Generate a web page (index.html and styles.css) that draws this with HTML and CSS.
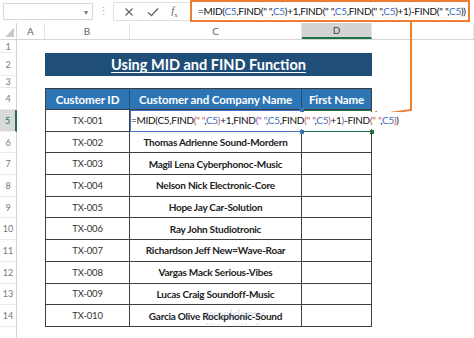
FILE: index.html
```html
<!DOCTYPE html>
<html lang="en">
<head>
  <meta charset="UTF-8" />
  <title>Using MID and FIND Function</title>
  <link rel="stylesheet" href="styles.css">
</head>
<body>
  <div class="window">

    <!-- formula bar -->
    <div class="toolbar">
      <div class="namebox"><span class="drop">▾</span></div>
      <div class="grip">⋮</div>
      <div class="buttons">
        <svg class="icon" viewBox="0 0 10 10" width="10" height="10"><path d="M1.5 1.5 L8.5 8.5 M8.5 1.5 L1.5 8.5" /></svg>
        <svg class="icon" viewBox="0 0 12 10" width="12" height="10"><path d="M1 5.5 L4.5 8.5 L11 1.5" /></svg>
        <span class="fx"><i>f</i><sub>x</sub></span>
      </div>
      <div class="formula">=MID(<span class="ref">C5</span>,FIND(" ",<span class="ref">C5</span>)+1,FIND(" ",<span class="ref">C5</span>,FIND(" ",<span class="ref">C5</span>)+1)-FIND(" ",<span class="ref">C5</span>))<span class="cursor"></span></div>
    </div>

    <!-- worksheet -->
    <div class="sheet">
      <div class="row colheads">
        <div class="rh corner"><svg viewBox="0 0 10 10" width="9" height="9"><polygon points="10,0 10,10 0,10" /></svg></div>
        <div class="a ch">A</div>
        <div class="b ch">B</div>
        <div class="c ch">C</div>
        <div class="d ch active">D</div>
        <div class="e ch"></div>
      </div>

      <div class="row r1">
        <div class="rh">1</div>
      </div>

      <div class="row r2">
        <div class="rh">2</div>
        <div class="a"></div>
        <div class="title"><span>Using MID and FIND Function</span></div>
      </div>

      <div class="row r3">
        <div class="rh">3</div>
      </div>

      <div class="row r4">
        <div class="rh">4</div>
        <div class="a"></div>
        <div class="b head">Customer ID</div>
        <div class="c head">Customer and Company Name</div>
        <div class="d head">First Name</div>
      </div>

      <div class="row">
        <div class="rh current">5</div>
        <div class="a"></div>
        <div class="b cell">TX-001</div>
        <div class="c cell c5">
          <span class="editing">=MID(C5,FIND<span class="p1">(" "</span>,<span class="ref">C5</span><span class="p1">)</span>+1,FIND<span class="p2">(" "</span>,<span class="ref">C5</span>,FIND<span class="p1">(" "</span>,<span class="ref">C5</span><span class="p1">)</span>+1<span class="p2">)</span>-FIND<span class="p1">(" "</span>,<span class="ref">C5</span><span class="p1">)</span>)</span>
        </div>
        <div class="d cell d5"></div>
      </div>

      <div class="row">
        <div class="rh">6</div><div class="a"></div>
        <div class="b cell">TX-002</div>
        <div class="c cell name">Thomas Adrienne Sound-Mordern</div>
        <div class="d cell"></div>
      </div>
      <div class="row">
        <div class="rh">7</div><div class="a"></div>
        <div class="b cell">TX-003</div>
        <div class="c cell name">Magil Lena Cyberphonoc-Music</div>
        <div class="d cell"></div>
      </div>
      <div class="row">
        <div class="rh">8</div><div class="a"></div>
        <div class="b cell">TX-004</div>
        <div class="c cell name">Nelson Nick Electronic-Core</div>
        <div class="d cell"></div>
      </div>
      <div class="row">
        <div class="rh">9</div><div class="a"></div>
        <div class="b cell">TX-005</div>
        <div class="c cell name">Hope Jay Car-Solution</div>
        <div class="d cell"></div>
      </div>
      <div class="row">
        <div class="rh">10</div><div class="a"></div>
        <div class="b cell">TX-006</div>
        <div class="c cell name">Ray John Studiotronic</div>
        <div class="d cell"></div>
      </div>
      <div class="row">
        <div class="rh">11</div><div class="a"></div>
        <div class="b cell">TX-007</div>
        <div class="c cell name">Richardson Jeff New=Wave-Roar</div>
        <div class="d cell"></div>
      </div>
      <div class="row">
        <div class="rh">12</div><div class="a"></div>
        <div class="b cell">TX-008</div>
        <div class="c cell name">Vargas Mack Serious-Vibes</div>
        <div class="d cell"></div>
      </div>
      <div class="row">
        <div class="rh">13</div><div class="a"></div>
        <div class="b cell">TX-009</div>
        <div class="c cell name">Lucas Craig Soundoff-Music</div>
        <div class="d cell"></div>
      </div>
      <div class="row">
        <div class="rh">14</div><div class="a"></div>
        <div class="b cell">TX-010</div>
        <div class="c cell name">Garcia Olive Rockphonic-Sound</div>
        <div class="d cell"></div>
      </div>
      <div class="row">
        <div class="rh"></div>
      </div>
    </div>

    <!-- watermark -->
    <div class="watermark">
      <span class="mark">exceldemy</span>
      <span class="tag">EXCEL · DATA · BI</span>
    </div>

    <!-- orange callout from formula bar to D5 -->
    <svg class="callout" width="474" height="338" viewBox="0 0 474 338">
      <polyline points="411,21 411,110 376,115" />
      <polygon points="366,116.5 377,110.5 378,119" />
    </svg>
  </div>
</body>
</html>
```

FILE: styles.css
```css
* {
  box-sizing: border-box;
}
body {
  margin: 0;
  background: #fff;
  color: #222;
  font-family: "Lato", "Open Sans", sans-serif;
}
.window {
  position: relative;
  width: 474px;
  height: 338px;
  overflow: hidden;
}

/* formula bar */
.toolbar {
  display: flex;
  align-items: flex-start;
  height: 23px;
}
.namebox {
  width: 90px;
  height: 17px;
  margin: 3px 0 0 3px;
  border: 1px solid #dadada;
  display: flex;
  justify-content: flex-end;
  align-items: center;
  padding-right: 4px;
}
.drop {
  font-size: 8px;
  color: #777;
}
.grip {
  width: 20px;
  margin-top: 4px;
  text-align: center;
  color: #aaa;
  font-size: 11px;
}
.buttons {
  width: 77px;
  height: 19px;
  margin-top: 2px;
  display: flex;
  justify-content: space-around;
  align-items: center;
  border: 1px solid #e0e0e0;
  border-right: none;
  padding: 0 6px 0 4px;
}
.icon path {
  fill: none;
  stroke: #666;
  stroke-width: 1.3;
}
.fx {
  font-family: "Liberation Serif", serif;
  color: #666;
  font-size: 11px;
}
.fx sub {
  font-size: 7px;
}
.formula {
  flex: 1;
  height: 22px;
  margin-right: 4px;
  border: 2px solid #ed7d31;
  padding-left: 6px;
  font-size: 10px;
  letter-spacing: -0.3px;
  line-height: 18px;
  white-space: nowrap;
  overflow: hidden;
  color: #111;
}
.cursor {
  display: inline-block;
  width: 1px;
  height: 13px;
  margin-left: 2px;
  vertical-align: -2px;
  background: #111;
}
.ref {
  color: #3a6cc4;
}

/* worksheet */
.row {
  display: flex;
  height: 21.7px;
}
.rh {
  width: 17px;
  flex: none;
  border-right: 1px solid #d6d6d6;
  border-bottom: 1px solid #ececec;
  display: flex;
  align-items: center;
  justify-content: center;
  font-size: 9px;
  color: #777;
}
.rh.current {
  background: #d9d9d9;
  border-right: 2px solid #217346;
  color: #217346;
}
.a {
  width: 28px;
  flex: none;
}
.b {
  width: 85px;
  flex: none;
}
.c {
  width: 172px;
  flex: none;
}
.d {
  width: 70px;
  flex: none;
}
.e {
  flex: 1;
}

.colheads {
  height: 17px;
  border-bottom: 1px solid #d6d6d6;
}
.corner {
  align-items: flex-end;
  justify-content: flex-end;
  padding: 0 2px 2px 0;
  border-bottom: none;
}
.corner polygon {
  fill: #c8c8c8;
}
.ch {
  display: flex;
  align-items: center;
  justify-content: center;
  border-right: 1px solid #e4e4e4;
  font-size: 10px;
  color: #666;
}
.ch.active {
  background: #d4d4d4;
  border-bottom: 2px solid #217346;
  color: #444;
}

.r1 {
  height: 13px;
}
.r2 {
  height: 23px;
}
.r3 {
  height: 12px;
}
.r4 {
  height: 22px;
}

.title {
  width: 327px;
  background: #1f4e79;
  color: #fff;
  font-weight: bold;
  font-size: 14.5px;
  display: flex;
  align-items: center;
  justify-content: center;
}
.title span {
  text-decoration: underline;
  text-underline-offset: 2px;
}

.head {
  background: #2e75b6;
  color: #fff;
  font-weight: bold;
  font-size: 11.5px;
  letter-spacing: -0.1px;
  white-space: nowrap;
  display: flex;
  align-items: center;
  justify-content: center;
  border-top: 1px solid #3c3c3c;
  border-right: 1px solid #1f4e79;
  border-bottom: 1px solid #3c3c3c;
}
.head.b {
  border-left: 1px solid #3c3c3c;
}
.head.d {
  border-right-color: #3c3c3c;
}

.cell {
  display: flex;
  align-items: center;
  justify-content: center;
  border-right: 1px solid #404040;
  border-bottom: 1px solid #404040;
  font-size: 9.5px;
  letter-spacing: -0.2px;
  white-space: nowrap;
  color: #333;
}
.cell.b {
  border-left: 1px solid #404040;
}
.name {
  font-size: 10px;
  letter-spacing: -0.25px;
  font-weight: bold;
  color: #222;
}

/* cell being edited and its reference */
.c5 {
  position: relative;
  justify-content: flex-start;
  border-right-color: #4472c4;
  border-bottom-color: #4472c4;
  box-shadow: inset 1px 0 0 #4472c4, inset 0 1px 0 #4472c4;
}
.c5::before,
.c5::after {
  content: "";
  position: absolute;
  right: -3px;
  width: 4px;
  height: 4px;
  background: #4472c4;
}
.c5::before {
  top: -2px;
}
.c5::after {
  bottom: -3px;
}
.editing {
  position: relative;
  z-index: 1;
  display: inline-block;
  margin-left: 1px;
  padding-right: 2px;
  height: 17px;
  line-height: 17px;
  background: #fff;
  white-space: nowrap;
  font-size: 10px;
  letter-spacing: -0.3px;
  color: #111;
}
.p1 {
  color: #c0504d;
}
.p2 {
  color: #8a4fb8;
}
.d5 {
  position: relative;
  border-right-color: #217346;
  border-bottom-color: #217346;
  box-shadow: inset 0 1px 0 #217346;
}
.d5::after {
  content: "";
  position: absolute;
  right: -3px;
  bottom: -3px;
  width: 4px;
  height: 4px;
  background: #217346;
}

/* watermark */
.watermark {
  position: absolute;
  left: 203px;
  top: 306px;
  display: flex;
  flex-direction: column;
  align-items: center;
  opacity: 0.22;
  color: #6f86b5;
}
.mark {
  font-size: 13px;
  font-weight: bold;
}
.tag {
  font-size: 5px;
  letter-spacing: 1px;
}

.callout {
  position: absolute;
  left: 0;
  top: 0;
  pointer-events: none;
}
.callout polyline {
  fill: none;
  stroke: #ed7d31;
  stroke-width: 2;
}
.callout polygon {
  fill: #ed7d31;
}
```
